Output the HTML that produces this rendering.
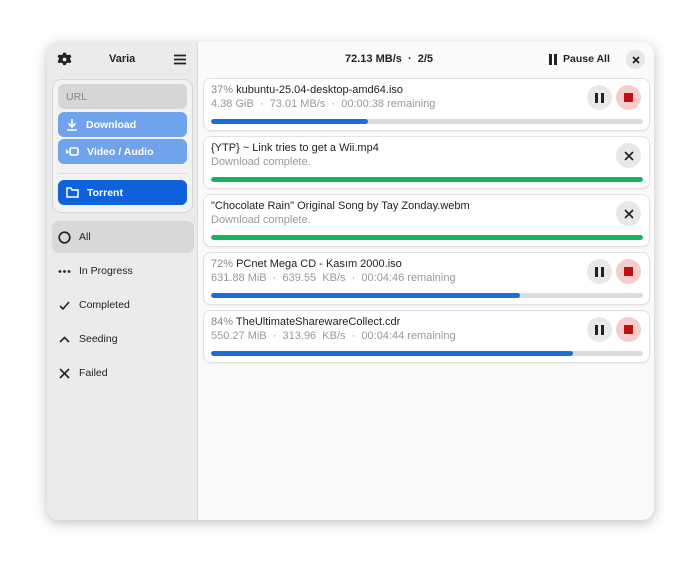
<!DOCTYPE html><html><head><style>
*{box-sizing:border-box;margin:0;padding:0}
body{width:700px;height:571px;background:#fff;font-family:"Liberation Sans",sans-serif;position:relative;overflow:hidden}
.win{position:absolute;left:47px;top:42px;width:607px;height:478px;border-radius:12px;background:#fafafa;box-shadow:0 3px 12px rgba(0,0,0,.25);overflow:hidden}
.side{position:absolute;left:0;top:0;width:151px;height:478px;background:#ebebed;border-right:1px solid #dcdcdc}
.a{position:absolute}
.frame{left:5px;top:37px;width:141px;height:134px;border:1px solid #d6d6d8;border-radius:9px;background:#f2f2f3}
.btn{position:absolute;left:6px;width:129px;height:25px;border-radius:6px;font-size:10.5px;font-weight:bold;color:#fff;display:flex;align-items:center;padding-left:8px;gap:8px}
.nav{position:absolute;left:5px;width:142px;height:32px;border-radius:7px;display:flex;align-items:center;padding-left:6px;gap:8px;font-size:10.5px;color:#222}
.card{position:absolute;left:156px;width:447px;height:53px;background:#fff;border:1px solid #e2e2e2;border-radius:8px;box-shadow:0 1px 2px rgba(0,0,0,.06)}
.t1{position:absolute;left:7px;top:5px;font-size:11px;color:#222;white-space:nowrap}
.t1 span{color:#888}
.t2{position:absolute;left:7px;top:19px;font-size:11px;color:#999;white-space:nowrap}
.bar{position:absolute;left:7px;top:40px;width:432px;height:5px;border-radius:3px;background:#dcdcdc;overflow:hidden}
.bar i{display:block;height:100%;border-radius:3px}
.cb{position:absolute;top:6px;width:25px;height:25px;border-radius:50%;display:flex;align-items:center;justify-content:center}
</style></head><body>
<div class="win">
<div class="side">
<svg class="a" style="left:10px;top:10px" width="15" height="15" viewBox="0 0 24 24"><circle cx="12" cy="12" r="4" fill="none" stroke="#222" stroke-width="3"/><path d="M10 1h4l1 3 3 1 3-1 2 3-2 3v2l2 3-2 3-3-1-3 1-1 3h-4l-1-3-3-1-3 1-2-3 2-3v-2L1 7l2-3 3 1 3-1z" fill="#222"/><circle cx="12" cy="12" r="3" fill="#ebebed"/></svg>
<div class="a" style="left:62px;top:11px;font-size:11px;font-weight:bold;color:#222">Varia</div>
<svg class="a" style="left:127px;top:12px" width="12" height="11"><path d="M0 1.5h12M0 5.5h12M0 9.5h12" stroke="#222" stroke-width="1.8"/></svg>
<div class="a frame"></div>
<div class="btn" style="left:11px;top:42px;background:#d6d6d8;color:#888;font-weight:normal">URL</div>
<div class="btn" style="left:11px;top:70px;background:#6fa3ec"><svg width="12" height="12"><path d="M6 0v8M2.5 4.5L6 8l3.5-3.5M1 11h10" stroke="#fff" stroke-width="1.6" fill="none"/></svg>Download</div>
<div class="btn" style="left:11px;top:97px;background:#6fa3ec"><svg width="13" height="11"><rect x="4" y="2" width="8" height="7" rx="1.5" fill="none" stroke="#fff" stroke-width="1.6"/><path d="M0 3v5l3-2z" fill="#fff"/></svg>Video / Audio</div>
<div class="a" style="left:11px;top:131px;width:129px;height:1px;background:#ddd"></div>
<div class="btn" style="left:11px;top:138px;background:#0e63dc"><svg width="13" height="11"><path d="M1 1h4l1 2h6v7H1z" fill="none" stroke="#fff" stroke-width="1.5"/></svg>Torrent</div>
<div class="nav" style="top:179px;background:#d8d8da"><svg width="13" height="13"><circle cx="6.5" cy="6.5" r="5.3" fill="none" stroke="#222" stroke-width="1.7"/></svg>All</div>
<div class="nav" style="top:213px"><svg width="13" height="13"><circle cx="2" cy="6.5" r="1.4" fill="#222"/><circle cx="6.5" cy="6.5" r="1.4" fill="#222"/><circle cx="11" cy="6.5" r="1.4" fill="#222"/></svg>In Progress</div>
<div class="nav" style="top:247px"><svg width="13" height="13"><path d="M2 7l3 3 6-7" stroke="#222" stroke-width="1.6" fill="none"/></svg>Completed</div>
<div class="nav" style="top:281px"><svg width="13" height="13"><path d="M2 9l4.5-4.5L11 9" stroke="#222" stroke-width="1.6" fill="none"/></svg>Seeding</div>
<div class="nav" style="top:315px"><svg width="13" height="13"><path d="M2 2l9 9M11 2l-9 9" stroke="#222" stroke-width="1.6"/></svg>Failed</div>
</div>
<div class="a" style="left:298px;top:11px;font-size:11px;font-weight:bold;color:#222">72.13 MB/s &nbsp;·&nbsp; 2/5</div>
<svg class="a" style="left:501px;top:12px" width="10" height="11"><rect x="1" y="0" width="3" height="11" fill="#222"/><rect x="6" y="0" width="3" height="11" fill="#222"/></svg>
<div class="a" style="left:516px;top:11px;font-size:10.5px;font-weight:bold;color:#222">Pause All</div>
<div class="a" style="left:579px;top:8px;width:19px;height:19px;border-radius:50%;background:#e6e6e6;display:flex;align-items:center;justify-content:center"><svg width="8" height="8"><path d="M1 1l6 6M7 1L1 7" stroke="#222" stroke-width="1.7"/></svg></div>

<div class="card" style="top:36px"><div class="t1"><span>37%</span> kubuntu-25.04-desktop-amd64.iso</div><div class="t2">4.38 GiB &nbsp;·&nbsp; 73.01 MB/s &nbsp;·&nbsp; 00:00:38 remaining</div><div class="bar"><i style="width:157px;background:#1c6ddc"></i></div>
<div class="cb" style="left:383px;background:#e8e8e8"><svg width="9" height="10"><rect x="0" y="0" width="3" height="10" fill="#222"/><rect x="6" y="0" width="3" height="10" fill="#222"/></svg></div>
<div class="cb" style="left:412px;background:#f6cdcd"><svg width="9" height="9"><rect width="9" height="9" fill="#c01010"/></svg></div></div>

<div class="card" style="top:94px"><div class="t1">{YTP} ~ Link tries to get a Wii.mp4</div><div class="t2">Download complete.</div><div class="bar"><i style="width:100%;background:#14b45f"></i></div>
<div class="cb" style="left:412px;background:#e8e8e8"><svg width="10" height="10"><path d="M1 1l8 8M9 1L1 9" stroke="#222" stroke-width="1.7"/></svg></div></div>

<div class="card" style="top:152px"><div class="t1">"Chocolate Rain" Original Song by Tay Zonday.webm</div><div class="t2">Download complete.</div><div class="bar"><i style="width:100%;background:#14b45f"></i></div>
<div class="cb" style="left:412px;background:#e8e8e8"><svg width="10" height="10"><path d="M1 1l8 8M9 1L1 9" stroke="#222" stroke-width="1.7"/></svg></div></div>

<div class="card" style="top:210px"><div class="t1"><span>72%</span> PCnet Mega CD - Kasım 2000.iso</div><div class="t2">631.88 MiB &nbsp;·&nbsp; 639.55 &nbsp;KB/s &nbsp;·&nbsp; 00:04:46 remaining</div><div class="bar"><i style="width:309px;background:#1c6ddc"></i></div>
<div class="cb" style="left:383px;background:#e8e8e8"><svg width="9" height="10"><rect x="0" y="0" width="3" height="10" fill="#222"/><rect x="6" y="0" width="3" height="10" fill="#222"/></svg></div>
<div class="cb" style="left:412px;background:#f6cdcd"><svg width="9" height="9"><rect width="9" height="9" fill="#c01010"/></svg></div></div>

<div class="card" style="top:268px"><div class="t1"><span>84%</span> TheUltimateSharewareCollect.cdr</div><div class="t2">550.27 MiB &nbsp;·&nbsp; 313.96 &nbsp;KB/s &nbsp;·&nbsp; 00:04:44 remaining</div><div class="bar"><i style="width:362px;background:#1c6ddc"></i></div>
<div class="cb" style="left:383px;background:#e8e8e8"><svg width="9" height="10"><rect x="0" y="0" width="3" height="10" fill="#222"/><rect x="6" y="0" width="3" height="10" fill="#222"/></svg></div>
<div class="cb" style="left:412px;background:#f6cdcd"><svg width="9" height="9"><rect width="9" height="9" fill="#c01010"/></svg></div></div>
</div>
</body></html>
